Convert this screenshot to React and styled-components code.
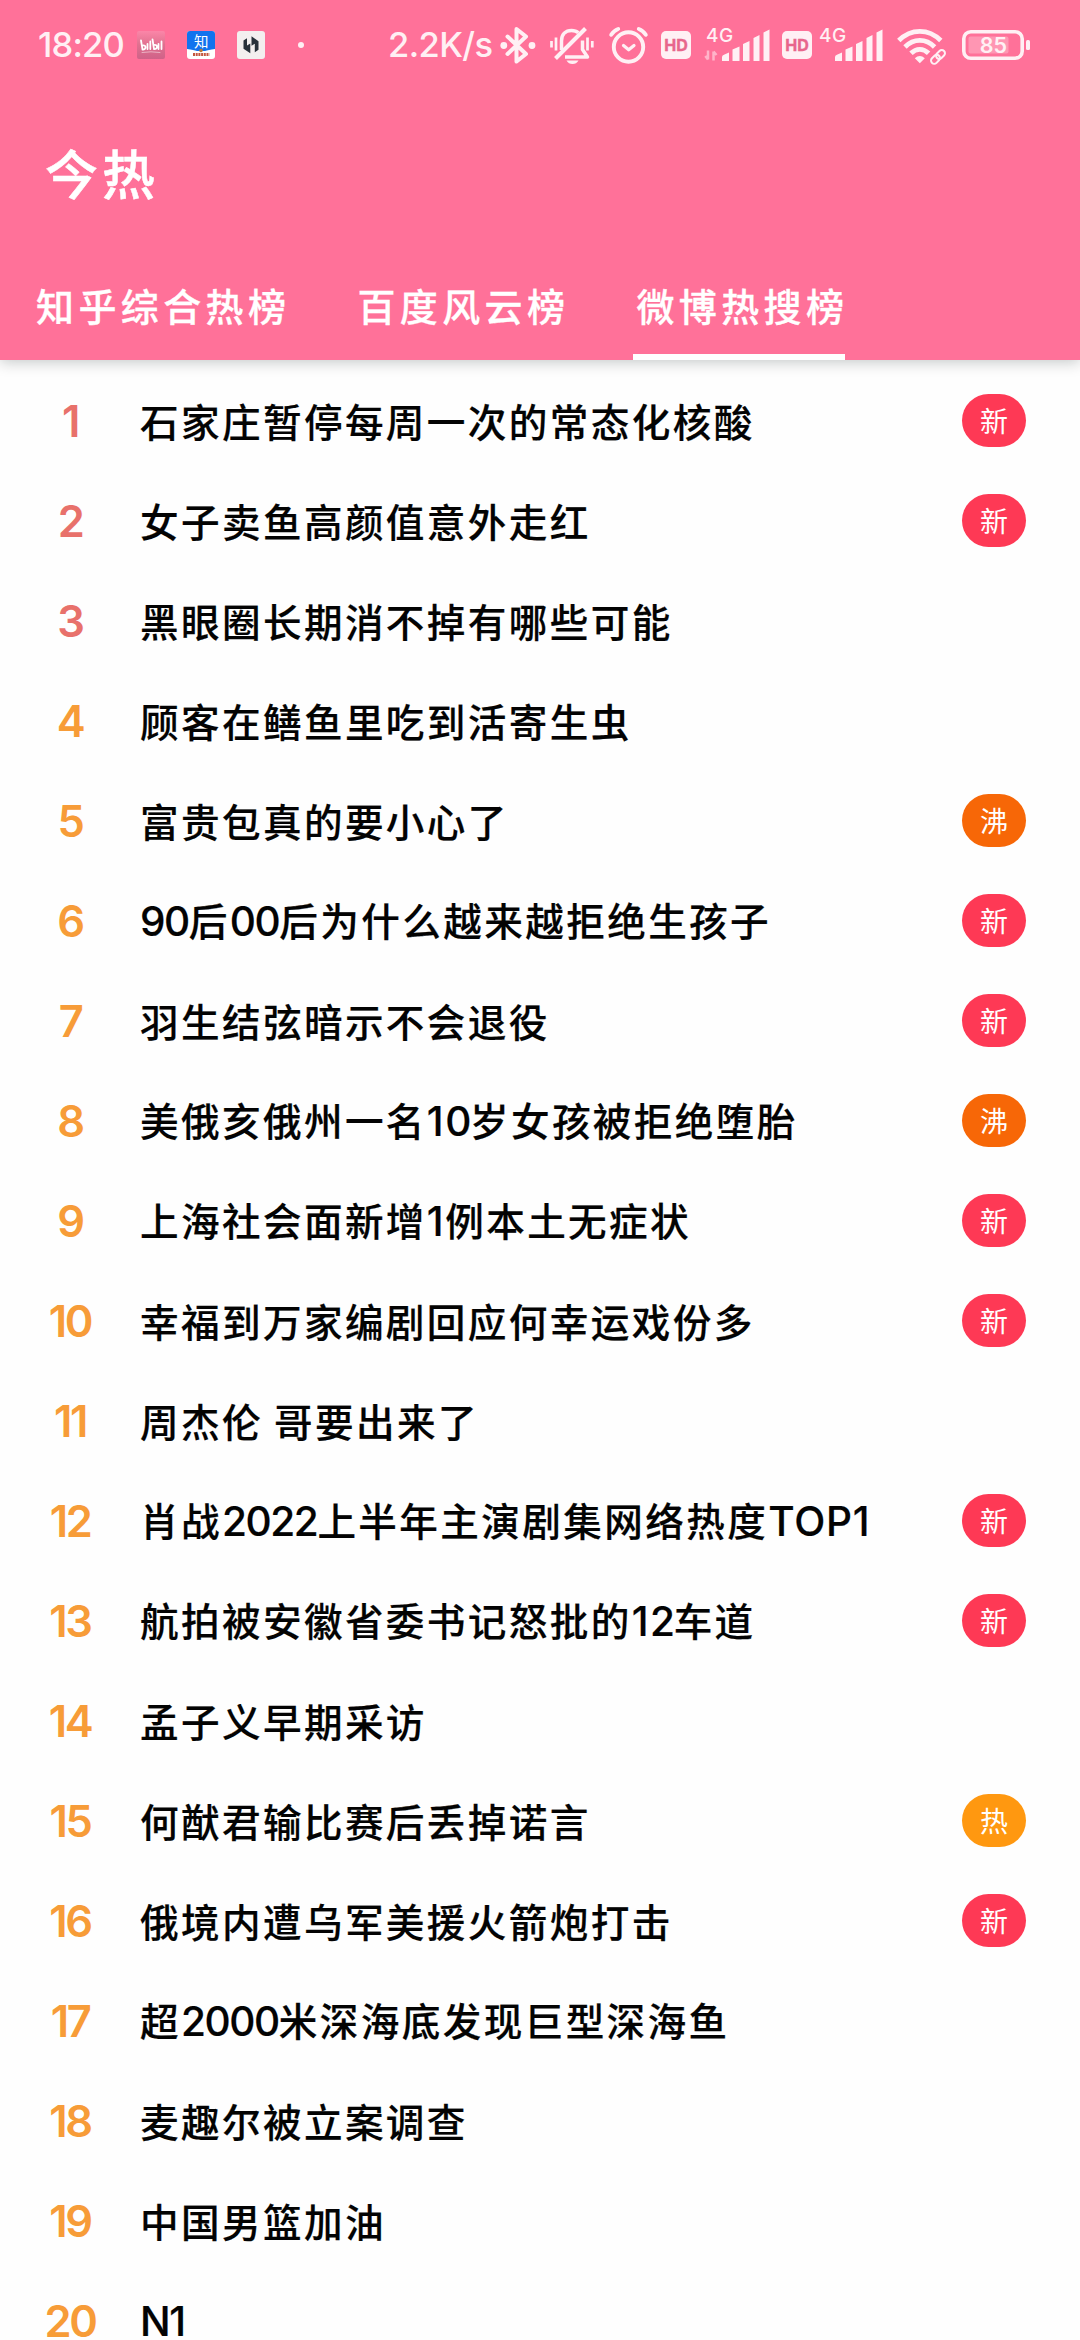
import React from "react";
import styled, { createGlobalStyle } from "styled-components";

const GlobalStyle = createGlobalStyle`
  * { box-sizing: border-box; }
  html, body { margin: 0; padding: 0; background: #fefefe; }
  body { overflow: hidden; }
`;

const cjk = `"Noto Sans CJK SC", sans-serif`;
const latin = `Inter, "Noto Sans CJK SC", sans-serif`;
const ICON = "#fff0f4";
const PINK = "#ff7199";

const Screen = styled.div`
  width: 1080px;
  height: 2340px;
  overflow: hidden;
  display: flex;
  flex-direction: column;
  background: #fefefe;
  font-family: ${cjk};
`;

const Header = styled.header`
  flex: none;
  height: 360px;
  display: flex;
  flex-direction: column;
  background: ${PINK};
  box-shadow: 0 2px 14px rgba(0, 20, 20, 0.24);
  color: #fff;
`;

const StatusBar = styled.div`
  flex: none;
  height: 90px;
  padding: 0 50px 0 38px;
  display: flex;
  align-items: center;
  justify-content: space-between;
`;

const StatusGroup = styled.div`
  display: flex;
  align-items: center;
`;

const StatusText = styled.span`
  width: ${(p) => p.$w}px;
  font-family: ${latin};
  font-size: 34.5px;
  font-weight: 500;
  line-height: 90px;
  letter-spacing: ${(p) => p.$ls}px;
  white-space: nowrap;
  color: ${ICON};
`;

const Icon = styled.svg`
  display: block;
  flex: none;
  margin-left: ${(p) => p.$gap || 0}px;
  overflow: visible;
`;

const TitleBar = styled.h1`
  flex: none;
  height: 168px;
  margin: 0;
  padding-left: 45px;
  font-size: 53px;
  font-weight: 500;
  line-height: 164px;
  letter-spacing: 4px;
  -webkit-text-stroke: 0.5px #fff;
`;

const Tabs = styled.nav`
  flex: 1;
  display: flex;
  gap: 67px;
  padding-left: 33px;
`;

const Tab = styled.div`
  display: flex;
  align-items: center;
  height: 102px;
  padding-bottom: 10px;
  box-shadow: ${(p) => (p.$active ? "inset 0 -6px 0 #fff" : "none")};
`;

const TabLabel = styled.span`
  margin: 0 -3px 0 3px;
  font-size: 38px;
  font-weight: 500;
  letter-spacing: 4.4px;
  white-space: nowrap;
  -webkit-text-stroke: 0.3px #fff;
`;

const List = styled.ol`
  list-style: none;
  margin: 0;
  padding: 10px 0 0;
`;

const Row = styled.li`
  display: flex;
  align-items: center;
  height: 100px;
  padding-right: 54px;
`;

const Rank = styled.span`
  width: 140px;
  flex: none;
  padding-top: 2px;
  text-align: center;
  font-family: ${latin};
  font-size: 43.5px;
  font-weight: 600;
  line-height: 46px;
  letter-spacing: -2.4px;
  color: ${(p) => (p.$top ? "#e8716b" : "#f79c38")};
`;

const Title = styled.span`
  flex: 1;
  font-size: 38.6px;
  font-weight: 500;
  line-height: 58px;
  letter-spacing: 2.4px;
  white-space: nowrap;
  color: #030303;
  -webkit-text-stroke: 0.2px #030303;
`;

const Latin = styled.span`
  font-family: ${latin};
  font-size: 40.5px;
  font-weight: 500;
  letter-spacing: ${(p) => p.$ls}px;
`;

const badgeColors = { 新: "#fe3955", 沸: "#f76707", 热: "#ff9810" };

const Badge = styled.span`
  width: 64px;
  height: 53px;
  flex: none;
  border-radius: 26.5px;
  display: flex;
  align-items: center;
  justify-content: center;
  font-size: 28px;
  font-weight: 400;
  line-height: 53px;
  color: #fff;
  background: ${(p) => badgeColors[p.$kind]};
`;

const rows = [
  ["石家庄暂停每周一次的常态化核酸", "新"],
  ["女子卖鱼高颜值意外走红", "新"],
  ["黑眼圈长期消不掉有哪些可能"],
  ["顾客在鳝鱼里吃到活寄生虫"],
  ["富贵包真的要小心了", "沸"],
  ["90后00后为什么越来越拒绝生孩子", "新"],
  ["羽生结弦暗示不会退役", "新"],
  ["美俄亥俄州一名10岁女孩被拒绝堕胎", "沸"],
  ["上海社会面新增1例本土无症状", "新"],
  ["幸福到万家编剧回应何幸运戏份多", "新"],
  ["周杰伦 哥要出来了"],
  ["肖战2022上半年主演剧集网络热度TOP1", "新"],
  ["航拍被安徽省委书记怒批的12车道", "新"],
  ["孟子义早期采访"],
  ["何猷君输比赛后丢掉诺言", "热"],
  ["俄境内遭乌军美援火箭炮打击", "新"],
  ["超2000米深海底发现巨型深海鱼"],
  ["麦趣尔被立案调查"],
  ["中国男篮加油"],
  ["N1"],
];

// Narrow "1" needs looser tracking than the round digits.
const tracking = (run) => {
  if (/^1/.test(run)) return 1.5;
  if (/^\d/.test(run)) return -1.4;
  return run.length > 1 ? 0.8 : -1.5;
};

const withLatin = (text) =>
  text
    .split(/(1+|[02-9]+|[A-Za-z]+)/)
    .filter(Boolean)
    .map((part, i) =>
      /^[A-Za-z0-9]/.test(part) ? (
        <Latin key={i} $ls={tracking(part)}>{part}</Latin>
      ) : (
        part
      )
    );

const Bilibili = () => (
  <Icon $gap={14} width="28" height="28" viewBox="0 0 28 28">
    <defs>
      <linearGradient id="bili" x1="0" y1="0" x2="0" y2="1">
        <stop offset="0" stopColor="#fb86a8" />
        <stop offset="0.5" stopColor="#e0708f" />
        <stop offset="1" stopColor="#cf6288" />
      </linearGradient>
    </defs>
    <rect width="28" height="28" rx="2" fill="url(#bili)" />
    <g stroke="#fff" strokeWidth="1.8" fill="none" strokeLinecap="round">
      <path d="M4 9.500l1.500 9c4 .5 4-5 0-4M10.500 13v5M13.300 10.500v7.500M15.500 8.500l1.500 9.500c4 .5 4-5 0-4M21.500 13v5M24.500 10.500v7.500" />
      <path d="M5 21.500q9-1.500 18 0" strokeWidth="0.8" opacity="0.6" />
    </g>
  </Icon>
);

const Zhihu = () => (
  <Icon $gap={22} width="28" height="28" viewBox="0 0 28 28">
    <rect width="28" height="28" rx="3" fill="#fff" />
    <path d="M3 0h22a3 3 0 0 1 3 3v15q-7 1-10 2h-8q-3-1-10-2V3a3 3 0 0 1 3-3z" fill="#1173ee" />
    <text x="14.300" y="15.500" textAnchor="middle" fontFamily="Noto Sans CJK SC" fontSize="14.500" fill="#fff">知</text>
    <circle cx="14" cy="19.500" r="1.800" fill="#b9783a" />
    <path d="M6 23.500h16.500" stroke="#c4573f" strokeWidth="3" strokeDasharray="2 0.7" />
  </Icon>
);

const HApp = () => (
  <Icon $gap={22} width="28" height="28" viewBox="0 0 28 28">
    <rect width="28" height="28" rx="3" fill="#f3efef" />
    <path d="M6.500 9.500L10 7.300v7.200l3.300-2v9.700L6.500 17.700z" fill="#28313a" />
    <path d="M21.500 10.300L14.500 5.300v9.500l3.300-2v8.400l3.700-2.400z" fill="#28313a" />
  </Icon>
);

const Bluetooth = () => (
  <Icon $gap={9} width="36" height="38" viewBox="0 0 36 38">
    <path d="M7.500 10.500L26 28l-9.500 7.500V3L26 10.500 7.500 28" fill="none" stroke={ICON} strokeWidth="4" strokeLinejoin="round" strokeLinecap="round" />
    <circle cx="3.800" cy="19.500" r="3.400" fill={ICON} />
    <circle cx="32" cy="19.500" r="3.400" fill={ICON} />
  </Icon>
);

const MutedBell = () => (
  <Icon $gap={14} width="44" height="38" viewBox="0 0 44 38">
    <g fill="none" stroke={ICON} strokeWidth="3.500">
      <path d="M11.500 24V15c0-6.500 4-10.500 10-10.500 3 0 5.200.8 6.800 2.300M32.500 14.500v9l5 7.500H15" strokeLinejoin="round" />
      <path d="M5.500 32.500L35.500 2.500" strokeWidth="4" />
      <path d="M1.500 15v6.500M6 11.500v13M37.500 11.500v13M42.300 15v6.500" strokeWidth="2.700" />
    </g>
    <path d="M16.500 34.500h12q-2 3.500-6 3.500t-6-3.500z" fill={ICON} />
  </Icon>
);

const Alarm = () => (
  <Icon $gap={15} width="39" height="38" viewBox="0 0 39 38">
    <g fill="none" stroke={ICON} strokeWidth="3.900" strokeLinecap="round">
      <circle cx="19.500" cy="21" r="14.700" />
      <path d="M2.200 8.800Q5 4.500 9.200 3M36.800 8.800Q34 4.500 29.800 3" />
      <path d="M14.500 19.500l5.200 4.300 5.300-4.300" strokeWidth="3.200" strokeLinejoin="round" />
    </g>
  </Icon>
);

const HD = ({ gap }) => (
  <Icon $gap={gap} width="30" height="28" viewBox="0 0 30 28">
    <rect width="30" height="28" rx="5" fill={ICON} />
    <text x="15" y="20" textAnchor="middle" fontFamily="Inter" fontWeight="700" fontSize="16" fill="#e8668c" stroke="#e8668c" strokeWidth="0.4">HD</text>
  </Icon>
);

const Signal = ({ gap, arrows }) => (
  <Icon $gap={gap} width="63" height="36" viewBox="0 0 63 36">
    <text x="-1" y="14.500" fontFamily="Inter" fontWeight="500" fontSize="19" letterSpacing="0.5" fill={ICON}>4G</text>
    <path
      d="M15 34v-4q0-2 2.500-2.500l4.500-2V34zM25.500 34V22.500l7-3V34zM36 34V17l6.500-3v20zM46.500 34V11l6-3v26zM56.500 34V5.500l6-3V34z"
      fill={ICON}
    />
    {arrows && (
      <path d="M1.500 24v9M-1.200 29.500l2.700 3.500M7 34v-9M10 28.500L7 25" transform="translate(-.5 -.5)" stroke="#ffb4c9" strokeWidth="2.500" fill="none" />
    )}
  </Icon>
);

const Wifi = () => (
  <Icon $gap={14} width="50" height="38" viewBox="0 0 50 38">
    <g fill="none" stroke={ICON} strokeWidth="4.800">
      <path d="M1.800 14.500Q11 5.300 22.800 5.300T43.800 14.500" />
      <path d="M8 21q6.500-6.600 14.800-6.600T37.600 21" />
      <path d="M14 27.300q4-4 8.800-4t8.800 4" />
    </g>
    <path d="M17.800 32.300q5-4.500 10 0l-5 5z" fill={ICON} />
    <g fill="none" stroke={ICON} strokeWidth="2">
      <rect x="-5" y="-3.200" width="10" height="6.400" rx="3.200" transform="translate(38.500 33.300) rotate(-45)" />
      <rect x="-5" y="-3.200" width="10" height="6.400" rx="3.200" transform="translate(43.500 28.500) rotate(-45)" />
    </g>
  </Icon>
);

const Battery = () => (
  <Icon $gap={15} width="68" height="30" viewBox="0 0 68 30">
    <rect x="1.800" y="1.800" width="58.400" height="26.400" rx="7" fill="none" stroke={ICON} strokeWidth="3.600" />
    <rect x="6.500" y="6.500" width="40" height="17" rx="2" fill="#ff96b3" />
    <rect x="64" y="10" width="4" height="10" rx="1.500" fill={ICON} />
    <text x="31.500" y="23" textAnchor="middle" fontFamily="Inter" fontWeight="600" fontSize="21.500" fill={ICON}>85</text>
  </Icon>
);

const Dot = styled.i`
  width: 6px;
  height: 6px;
  margin-left: 33px;
  border-radius: 50%;
  background: ${ICON};
`;

export default function App() {
  return (
    <Screen>
      <GlobalStyle />
      <Header>
        <StatusBar>
          <StatusGroup>
            <StatusText $w={85} $ls={-0.8}>18:20</StatusText>
            <Bilibili />
            <Zhihu />
            <HApp />
            <Dot />
          </StatusGroup>
          <StatusGroup>
            <StatusText $w={103} $ls={-0.6}>2.2K/s</StatusText>
            <Bluetooth />
            <MutedBell />
            <Alarm />
            <HD gap={13} />
            <Signal gap={16} arrows />
            <HD gap={12} />
            <Signal gap={8} />
            <Wifi />
            <Battery />
          </StatusGroup>
        </StatusBar>
        <TitleBar>今热</TitleBar>
        <Tabs>
          <Tab><TabLabel>知乎综合热榜</TabLabel></Tab>
          <Tab><TabLabel>百度风云榜</TabLabel></Tab>
          <Tab $active><TabLabel>微博热搜榜</TabLabel></Tab>
        </Tabs>
      </Header>
      <List>
        {rows.map(([text, kind], i) => (
          <Row key={text}>
            <Rank $top={i < 3}>{i + 1}</Rank>
            <Title>{withLatin(text)}</Title>
            {kind && <Badge $kind={kind}>{kind}</Badge>}
          </Row>
        ))}
      </List>
    </Screen>
  );
}
